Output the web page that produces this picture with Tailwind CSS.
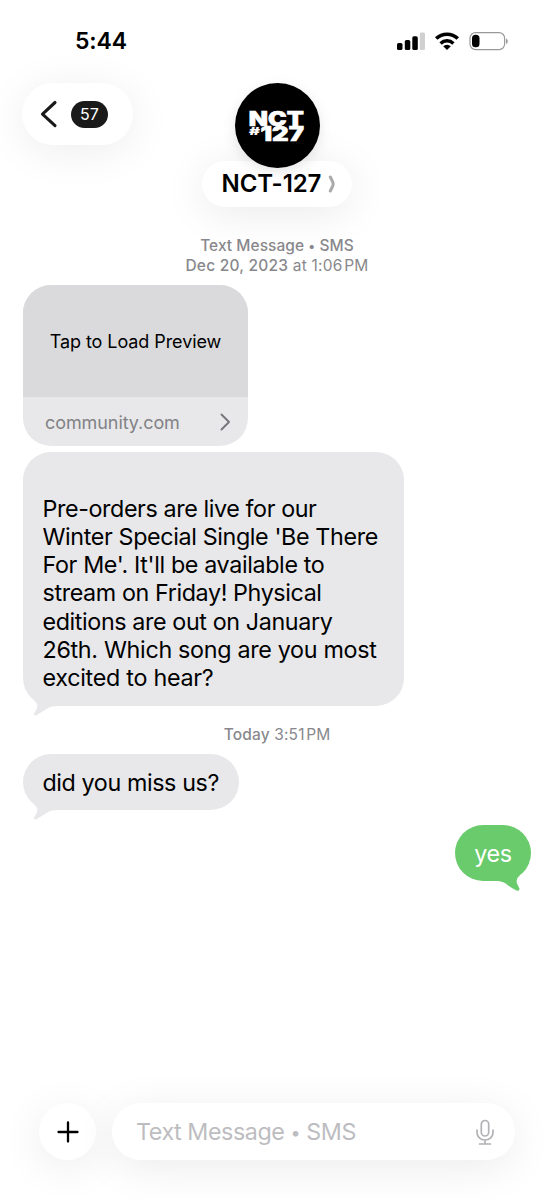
<!DOCTYPE html>
<html lang="en">
<head>
<meta charset="utf-8">
<meta name="viewport" content="width=device-width, initial-scale=1">
<title>Messages</title>
<script src="https://cdn.jsdelivr.net/npm/@tailwindcss/browser@4"></script>
</head>
<body class="bg-white">
<div class="flex h-[1200px] w-[554px] flex-col overflow-hidden bg-white font-['Inter',sans-serif] text-black">
  <!-- Status bar -->
  <div class="flex h-[83px] shrink-0 items-start justify-between pt-[27px] pr-[46px] pl-[75px]">
    <div class="text-[23px] leading-7 font-semibold whitespace-nowrap tracking-[-0.1px]">5:44</div>
    <svg class="mt-[4px] h-[20px] w-[112px]" viewBox="396 31 112 20">
      <rect x="397" y="43" width="5.5" height="7" rx="1.6"/>
      <rect x="404.8" y="40" width="5.5" height="10" rx="1.6"/>
      <rect x="412.3" y="36.3" width="5.5" height="13.7" rx="1.6"/>
      <rect x="419.8" y="32.4" width="5.2" height="17.6" rx="1.6" fill="#d0d0d0"/>
      <g fill="none" stroke="#000" stroke-width="3.5">
        <path d="M436.2 38.6a15.4 15.4 0 0 1 21.6 0"/>
        <path d="M440.6 43.4a9.3 9.3 0 0 1 12.8 0"/>
      </g>
      <path d="M443.2 46.3a5.5 5.5 0 0 1 7.6 0L447 50z"/>
      <rect x="470" y="32.6" width="34.6" height="17" rx="5.5" fill="#fff" stroke="#999" stroke-width="1.2"/>
      <path d="M506 38.4c2.4 1 2.4 4.6 0 5.500z" fill="#999"/>
      <rect x="472" y="34.800" width="7.500" height="12.500" rx="3.500"/>
    </svg>
  </div>

  <!-- Conversation header -->
  <header class="relative flex h-[124px] shrink-0 justify-center">
    <div class="absolute top-0 left-[22px] flex h-[62px] w-[111px] items-center rounded-full bg-white pl-[18px] shadow-[0_6px_44px_rgba(0,0,0,0.075)]">
      <svg class="h-[28px] w-[18px]" viewBox="0 0 18 28" fill="none" stroke="#1a1a1a" stroke-width="3.100" stroke-linecap="round" stroke-linejoin="round"><path d="M15 2.500 2.500 14.200 15 25.700"/></svg>
      <div class="ml-[13px] flex h-[27px] w-[37px] items-center justify-center rounded-full bg-[#1a1a1a] text-[16px] text-white">57</div>
    </div>
    <div class="flex flex-col items-center">
      <div class="z-10 size-[85px] rounded-full bg-black shadow-[0_4px_14px_rgba(0,0,0,0.1)]">
        <svg class="size-[85px]" viewBox="0 0 85 85" fill="#fff" stroke="#fff" font-family="Inter, sans-serif" font-weight="900">
          <text x="13.800" y="43" font-size="20.500" stroke-width=".6" textLength="55" lengthAdjust="spacingAndGlyphs">NCT</text>
          <text x="14" y="51.500" font-size="10.500" stroke-width=".1" textLength="11" lengthAdjust="spacingAndGlyphs">#</text>
          <text x="25.500" y="58.300" font-size="19.500" stroke-width=".6" textLength="43.500" lengthAdjust="spacingAndGlyphs">127</text>
        </svg>
      </div>
      <div class="-mt-[7px] flex h-[46px] w-[150px] items-center rounded-full bg-white pl-[19.500px] shadow-[0_6px_44px_rgba(0,0,0,0.085)]">
        <span class="text-[24px] leading-7 font-semibold whitespace-nowrap tracking-[-0.080px]">NCT-127</span>
        <svg class="ml-[6.500px] h-[18px] w-[8px]" viewBox="0 0 8 18" fill="none" stroke="#aaa" stroke-width="3" stroke-linecap="round" stroke-linejoin="round"><path d="M2.300 2l2.200 4.500q1.300 2.500 0 5L2.300 16"/></svg>
      </div>
    </div>
  </header>

  <!-- Message thread -->
  <main class="flex flex-col items-start">
    <div class="mt-[29px] w-full text-center text-[15.500px] leading-[20px] text-[#88888c]">
      <div class="font-medium tracking-[0.050px]">Text Message <span class="text-[13px]">•</span> SMS</div>
      <div class="tracking-[0.220px]"><span class="font-medium">Dec 20, 2023</span> at 1:06&#8202;PM</div>
    </div>

    <div class="mt-[9px] ml-[23px] flex h-[161px] w-[225px] flex-col overflow-hidden rounded-[28px] bg-[#e8e8ea]">
      <div class="flex h-[112px] items-center justify-center bg-[#dadadc] text-[18px] whitespace-nowrap tracking-[-0.080px]">Tap to Load Preview</div>
      <div class="flex h-[49px] items-center justify-between pr-[16px] pl-[22px] text-[18px] text-[#828286]">
        <span class="pt-[2px] tracking-[-0.080px]">community.com</span>
        <svg class="h-[18px] w-[13px]" viewBox="0 0 13 18" fill="none" stroke="#77777b" stroke-width="1.900" stroke-linecap="round" stroke-linejoin="round"><path d="M2.500 1.500 10 9 2.500 16.500"/></svg>
      </div>
    </div>

    <div class="relative mt-[6px] ml-[23px] h-[254px] w-[381px] rounded-[28px] bg-[#e8e8ea] pt-[43px] pl-[19.500px] text-[23.300px] leading-[28.150px] whitespace-nowrap">
      <div class="tracking-[-0.400px]">Pre-orders are live for our</div>
      <div class="tracking-[-0.370px]">Winter Special Single 'Be There</div>
      <div class="tracking-[-0.360px]">For Me'. It'll be available to</div>
      <div class="tracking-[-0.390px]">stream on Friday! Physical</div>
      <div class="tracking-[-0.390px]">editions are out on January</div>
      <div class="tracking-[-0.310px]">26th. Which song are you most</div>
      <div class="tracking-[-0.270px]">excited to hear?</div>
      <svg class="absolute bottom-[-10px] left-[6px] h-[24px] w-[34px]" viewBox="0 0 34 24" fill="#e8e8ea"><path d="M0 1 5 8Q10 12.500 7.500 17.500L5 21.500Q4.500 24 7.500 23.300L19 16Q22 14 28 14L34 13V0z"/></svg>
    </div>

    <div class="mt-[19px] w-full text-center text-[15.500px] leading-[20px] tracking-[0.150px] text-[#88888c]"><span class="font-medium">Today</span> 3:51&#8202;PM</div>

    <div class="relative mt-[9px] ml-[23px] flex h-[56px] w-[216px] items-center rounded-[28px] bg-[#e8e8ea] pt-[2px] pl-[19.500px] text-[23.300px] leading-[28px] tracking-[-0.400px] whitespace-nowrap">
      did you miss us?
      <svg class="absolute bottom-[-10px] left-[6px] h-[24px] w-[34px]" viewBox="0 0 34 24" fill="#e8e8ea"><path d="M0 1 5 8Q10 12.500 7.500 17.500L5 21.500Q4.500 24 7.500 23.300L19 16Q22 14 28 14L34 13V0z"/></svg>
    </div>

    <div class="relative mt-[15px] mr-[23px] flex h-[56px] w-[76px] items-center justify-center self-end rounded-[28px] bg-[#6acb6c] pt-[2px] text-[23.300px] leading-[28px] tracking-[-0.400px] text-white">
      yes
      <svg class="absolute right-[6px] bottom-[-10px] h-[24px] w-[34px]" viewBox="0 0 34 24" fill="#6acb6c"><path d="M33 1 28.500 8.500Q24.500 12 26 16.500L28.500 21.500Q28.500 24.500 25.500 23.500 20 21 16 17.500 12 14 6 14L0 13V0z"/></svg>
    </div>
  </main>

  <!-- Composer -->
  <footer class="mt-auto mb-[40px] flex h-[57px] shrink-0 items-center gap-[16px] pr-[39px] pl-[39px]">
    <div class="flex size-[57px] shrink-0 items-center justify-center rounded-full bg-white shadow-[0_8px_44px_rgba(0,0,0,0.08)]">
      <svg class="size-[24px]" viewBox="0 0 24 24" fill="none" stroke="#000" stroke-width="2.300" stroke-linecap="round"><path d="M12 2.500v19M2.500 12h19"/></svg>
    </div>
    <div class="flex h-[57px] flex-1 items-center justify-between rounded-full bg-white pr-[20px] pl-[24px] shadow-[0_8px_44px_rgba(0,0,0,0.08)]">
      <span class="pt-[2px] text-[23.300px] leading-[28px] tracking-[-0.450px] whitespace-nowrap text-[#bdbdc1]">Text Message <span class="align-[1px] text-[18px]">•</span> SMS</span>
      <svg class="h-[26px] w-[20px]" viewBox="0 0 20 26" fill="none" stroke="#b2b2b6" stroke-width="1.700" stroke-linecap="round"><rect x="6.300" y="1.500" width="7.400" height="15.500" rx="3.700"/><path d="M2 11v2.500a8 7.500 0 0 0 16 0V11M10 21v4M4.500 25h11"/></svg>
    </div>
  </footer>
</div>
</body>
</html>
